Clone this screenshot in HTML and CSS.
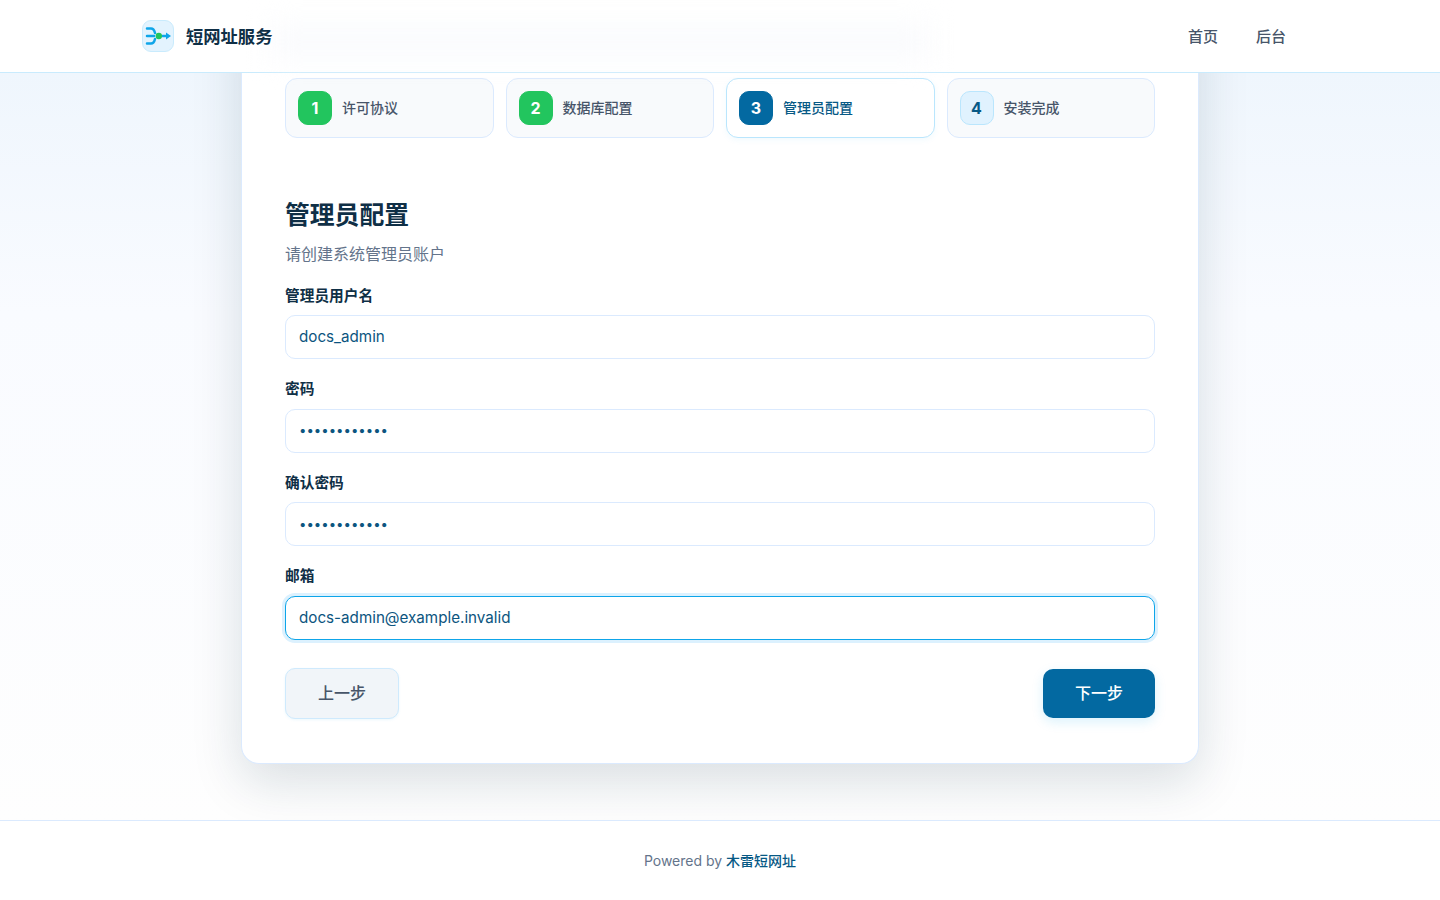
FILE: index.html
```html
<!DOCTYPE html>
<html lang="zh-CN">
<head>
  <meta charset="UTF-8">
  <title>安装向导 - 短网址服务</title>
  <meta name="viewport" content="width=device-width, initial-scale=1.0">
  <link rel="stylesheet" href="styles.css">
</head>
<body>

<header class="topbar">
  <div class="topbar-inner">
    <a class="brand" href="#">
      <span class="brand-logo">
        <svg viewBox="0 0 32 32" width="32" height="32" fill="none">
          <path d="M5 8.500h4c3 0 3.500 2.500 4 4.500M5 23.500h4c3 0 3.500-2.500 4-4.500M5 16h7M20.500 16h4" stroke="#0ea5e9" stroke-width="2.500" stroke-linecap="round"/>
          <path d="M24 12.500l5 3.500-5 3.500z" fill="#0ea5e9"/>
          <circle cx="16.800" cy="16" r="3.200" fill="#22c55e"/>
        </svg>
      </span>
      <span class="brand-name">短网址服务</span>
    </a>
    <nav class="topnav">
      <a href="#">首页</a>
      <a href="#">后台</a>
    </nav>
  </div>
</header>

<main class="page">
  <div class="card">
    <ul class="steps">
      <li class="step done"><span class="step-num">1</span><span class="step-text">许可协议</span></li>
      <li class="step done"><span class="step-num">2</span><span class="step-text">数据库配置</span></li>
      <li class="step active"><span class="step-num">3</span><span class="step-text">管理员配置</span></li>
      <li class="step"><span class="step-num">4</span><span class="step-text">安装完成</span></li>
    </ul>

    <h2 class="card-title">管理员配置</h2>
    <p class="card-sub">请创建系统管理员账户</p>

    <form>
      <div class="field">
        <label for="username">管理员用户名</label>
        <input type="text" id="username" value="docs_admin">
      </div>
      <div class="field">
        <label for="password">密码</label>
        <input type="password" id="password" value="docsadmin123">
      </div>
      <div class="field">
        <label for="confirm">确认密码</label>
        <input type="password" id="confirm" value="docsadmin123">
      </div>
      <div class="field">
        <label for="email">邮箱</label>
        <input type="text" id="email" class="focused" value="docs-admin@example.invalid">
      </div>
      <div class="actions">
        <button type="button" class="btn btn-back">上一步</button>
        <button type="button" class="btn btn-next">下一步</button>
      </div>
    </form>
  </div>
</main>

<footer class="footer">
  Powered by <a href="#">木雷短网址</a>
</footer>

</body>
</html>
```

FILE: styles.css
```css
* {
  box-sizing: border-box;
}

html, body {
  height: 100%;
}

body {
  margin: 0;
  display: flex;
  flex-direction: column;
  height: 900px;
  overflow: hidden;
  font-family: Inter, "Noto Sans CJK SC", sans-serif;
  color: #0f2f46;
  background: #fff;
}

a {
  text-decoration: none;
  color: inherit;
}

/* Top bar */
.topbar {
  position: relative;
  z-index: 10;
  height: 73px;
  flex: none;
  background: #fff;
  border-bottom: 1px solid #c9ebfd;
}

.topbar::before {
  content: "";
  position: absolute;
  left: 270px;
  top: 24px;
  width: 660px;
  height: 36px;
  background: #fafbfd;
  filter: blur(14px);
}

.topbar-inner {
  position: relative;
  width: 1160px;
  height: 72px;
  margin: 0 auto;
  display: flex;
  align-items: center;
  justify-content: space-between;
}

.brand {
  display: flex;
  align-items: center;
  gap: 12px;
  margin-left: 2px;
}

.brand-logo {
  width: 32px;
  height: 32px;
  display: flex;
  align-items: center;
  justify-content: center;
  background: #e3f3fe;
  border: 1px solid #c9ebfd;
  border-radius: 9px;
}

.brand-logo svg {
  flex: none;
}

.brand-name {
  padding-bottom: 2px;
  font-size: 17.300px;
  font-weight: 700;
  color: #0f2f46;
}

.topnav {
  display: flex;
  gap: 38px;
  margin-right: 14px;
  padding-bottom: 2px;
  font-size: 15px;
  font-weight: 500;
  color: #475569;
}

/* Main */
.page {
  flex: 1;
  min-height: 0;
  background: linear-gradient(180deg, #eff6fd 0%, #f9fbff 32%, #fefefe 100%);
}

.card {
  width: 958px;
  height: 764px;
  margin: -73px auto 0;
  padding: 78px 43px 44px;
  background: #fff;
  border-radius: 18px;
  border: 1px solid #dbeafe;
  border-top: 0;
  box-shadow: 0 18px 50px rgba(15, 47, 70, 0.15);
}

/* Steps */
.steps {
  list-style: none;
  margin: 0 0 59px;
  padding: 0;
  display: grid;
  grid-template-columns: repeat(4, 1fr);
  gap: 12px;
}

.step {
  height: 60px;
  display: flex;
  align-items: center;
  gap: 10px;
  padding: 0 12px;
  background: #f8fafc;
  border: 1px solid #dbeafe;
  border-radius: 12px;
  font-size: 14px;
  font-weight: 500;
  color: #475569;
}

.step-text {
  padding-bottom: 2px;
}

.step-num {
  width: 34px;
  height: 34px;
  flex: none;
  display: flex;
  align-items: center;
  justify-content: center;
  background: #e0f2fe;
  border: 1px solid #bae6fd;
  border-radius: 10px;
  font-size: 16px;
  font-weight: 700;
  color: #075985;
}

.step.done .step-num {
  background: #22c55e;
  border-color: #22c55e;
  color: #fff;
}

.step.active {
  background: #fff;
  border-color: #bae6fd;
  color: #075985;
  box-shadow: 0 2px 6px rgba(14, 165, 233, 0.06);
}

.step.active .step-num {
  background: #0369a1;
  border-color: #0369a1;
  color: #fff;
}

/* Form */
.card-title {
  margin: 0;
  font-size: 24.800px;
  line-height: 36px;
  font-weight: 700;
  color: #0f2f46;
}

.card-sub {
  margin: 9px 0 19.500px;
  font-size: 16px;
  line-height: 24px;
  color: #64748b;
}

.field {
  margin-bottom: 20px;
}

.field label {
  display: block;
  margin-bottom: 8px;
  font-size: 14.700px;
  line-height: 21.500px;
  font-weight: 600;
  color: #0f2f46;
}

.field input {
  display: block;
  width: 100%;
  height: 44px;
  padding: 0 13px 1px;
  font-family: inherit;
  font-size: 15.200px;
  color: #0c5580;
  background: #fff;
  border: 1px solid #dbeafe;
  border-radius: 10px;
  outline: none;
}

.field input[type="password"] {
  font-size: 13.200px;
}

.field input.focused {
  border-color: #0ea5e9;
  box-shadow: 0 0 0 3px #dcf1fe;
}

.actions {
  display: flex;
  align-items: center;
  justify-content: space-between;
  margin-top: 28px;
}

.btn {
  padding: 0 0 2px;
  font-family: inherit;
  font-size: 16px;
  font-weight: 500;
  border-radius: 10px;
  cursor: pointer;
}

.btn-back {
  width: 114px;
  height: 51px;
  color: #475569;
  background: #f1f5f9;
  border: 1px solid #cfeafd;
  box-shadow: 0 1px 3px rgba(14, 165, 233, 0.08);
}

.btn-next {
  width: 112px;
  height: 49px;
  color: #fff;
  background: #0369a1;
  border: 0;
  box-shadow: 0 4px 12px rgba(14, 165, 233, 0.15);
}

/* Footer */
.footer {
  height: 80px;
  flex: none;
  padding-top: 30px;
  text-align: center;
  font-size: 14px;
  line-height: 20px;
  color: #64748b;
  background: #fff;
  border-top: 1px solid #dbeafe;
}

.footer a {
  font-weight: 500;
  color: #075985;
}
```
